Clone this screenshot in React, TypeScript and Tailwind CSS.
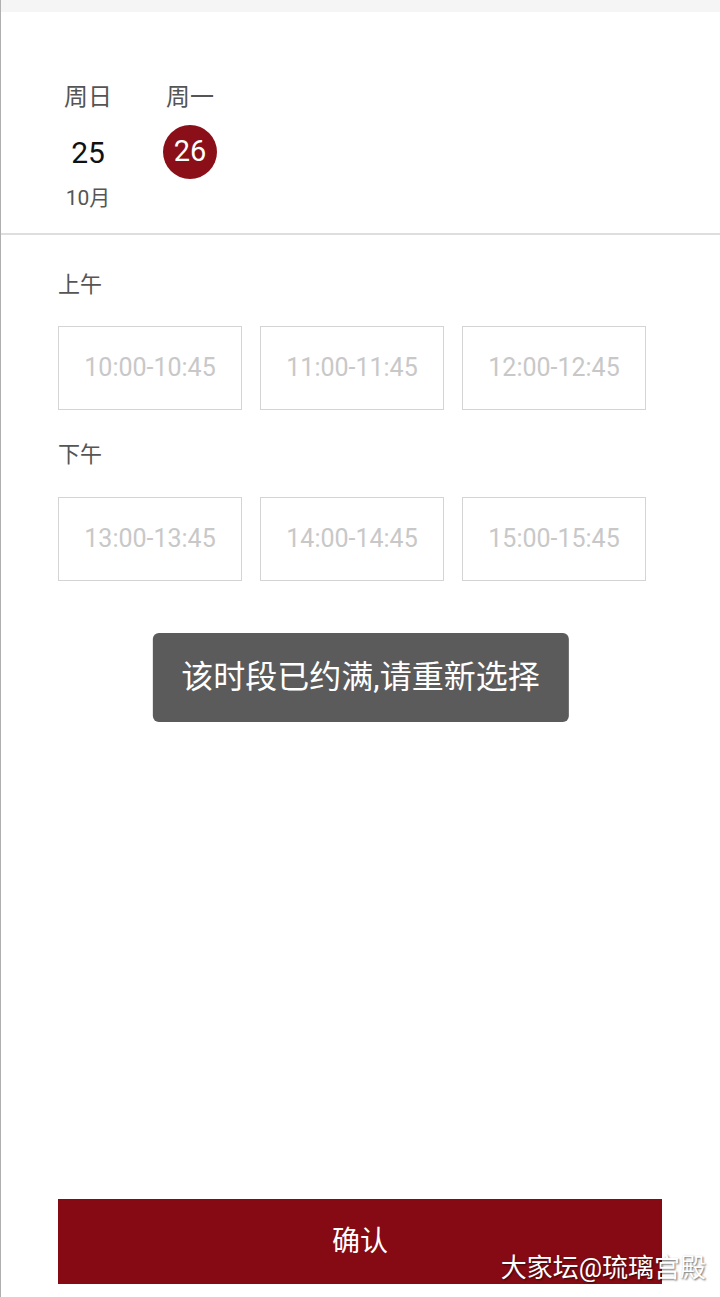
export default function App() {
  const morning = ["10:00-10:45", "11:00-11:45", "12:00-12:45"];
  const afternoon = ["13:00-13:45", "14:00-14:45", "15:00-15:45"];

  return (
    <div
      className="relative flex h-[1297px] w-[720px] flex-col overflow-hidden border-l border-[#b0b0b0] bg-white"
      style={{ fontFamily: 'Roboto, "Noto Sans CJK SC", sans-serif' }}
    >
      {/* TOP STRIP */}
      <div className="h-[12px] bg-[#f5f5f5]"></div>

      {/* DATE PICKER */}
      <div className="flex gap-[40px] pl-[56px] pt-[70px] pb-[23px]">
        <div className="flex w-[62px] flex-col items-center">
          <p className="text-[24px] leading-[30px] text-[#555]">周日</p>
          <div className="mt-[13px] flex h-[54px] w-[54px] items-center justify-center text-[30px] text-[#111]">
            25
          </div>
          <p className="mt-[7px] text-[21px] leading-[24px] text-[#555]">10月</p>
        </div>
        <div className="flex w-[62px] flex-col items-center">
          <p className="text-[24px] leading-[30px] text-[#555]">周一</p>
          <div className="mt-[13px] flex h-[54px] w-[54px] items-center justify-center rounded-full bg-[#8a0f18] text-[29px] text-white">
            26
          </div>
        </div>
      </div>

      <div className="h-[2px] bg-[#dedede]"></div>

      {/* TIME SLOTS */}
      <section className="pl-[57px] pt-[35px]">
        <p className="text-[22px] leading-[30px] text-[#555]">上午</p>
        <div className="mt-[26px] flex gap-[18px]">
          {morning.map((t) => (
            <div
              key={t}
              className="flex h-[84px] w-[184px] items-center justify-center border border-[#d4d4d4] text-[25px] text-[#c8c8c8]"
            >
              {t}
            </div>
          ))}
        </div>

        <p className="mt-[30px] text-[22px] leading-[30px] text-[#555]">下午</p>
        <div className="mt-[27px] flex gap-[18px]">
          {afternoon.map((t) => (
            <div
              key={t}
              className="flex h-[84px] w-[184px] items-center justify-center border border-[#d4d4d4] text-[25px] text-[#c8c8c8]"
            >
              {t}
            </div>
          ))}
        </div>
      </section>

      <div className="flex-1"></div>

      {/* CONFIRM BUTTON */}
      <div className="mb-[13px] pl-[57px]">
        <button className="flex h-[85px] w-[604px] items-center justify-center bg-[#850a14] text-[28px] text-white">
          确认
        </button>
      </div>

      {/* TOAST */}
      <div className="absolute left-1/2 top-[633px] -translate-x-1/2 whitespace-nowrap rounded-[6px] bg-[#5b5b5b] px-[29px] py-[22px] text-[32px] leading-[45px] text-white">
        该时段已约满,请重新选择
      </div>

      {/* WATERMARK */}
      <div className="absolute bottom-[12px] right-[14px] text-[26px] leading-[34px] text-white [text-shadow:1px_1px_2px_rgba(0,0,0,0.6)]">
        大家坛@琉璃宫殿
      </div>
    </div>
  );
}
